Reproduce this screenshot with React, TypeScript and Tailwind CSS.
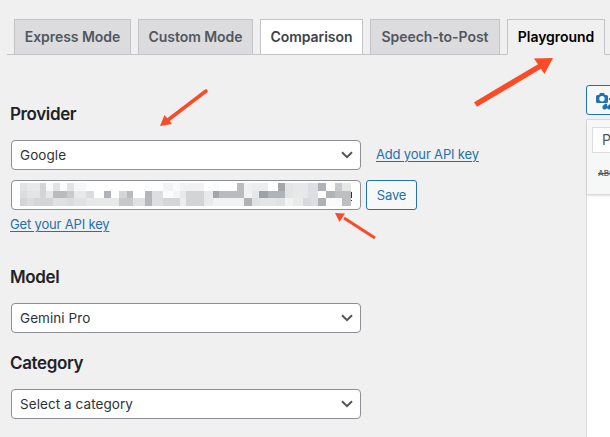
import React from "react";

type Cell = [number, number, string];

// Redacted key: horizontal runs of [start, end, colour] for each row of blocks.
const MOSAIC: Cell[][] = [
  [
    [0, 7, "#e2e3e4"], [7, 20, "#e8e9e9"], [20, 26, "#d4d5d7"], [26, 33, "#f8faf9"], [33, 40, "#e2e3e4"],
    [40, 47, "#fafcfb"], [47, 54, "#e2e3e4"], [54, 66, "#f6f7f7"], [125, 132, "#fcfdfd"], [143, 153, "#f2f4f4"],
    [153, 160, "#f9fbfa"], [160, 184, "#f2f2f2"], [193, 199, "#f9fbfb"], [217, 224, "#b9bbbd"], [224, 232, "#f1f1f1"],
    [232, 248, "#ecedee"], [258, 265, "#a4a7aa"], [265, 273, "#e2e4e5"], [273, 288, "#e7e9e8"], [288, 298, "#dddee1"],
    [298, 306, "#afb2b5"], [306, 315, "#fcfcfc"], [315, 322, "#c9cacd"], [322, 331, "#e5e7e7"],
  ],
  [
    [0, 7, "#dcdddf"], [7, 20, "#e3e4e5"], [20, 26, "#d4d5d7"], [26, 33, "#e6e7e8"], [33, 47, "#b9bbbd"],
    [47, 54, "#c9cacb"], [54, 66, "#e8e9e9"], [66, 74, "#dbdcde"], [84, 91, "#b0b3b6"], [91, 99, "#fbfcfc"],
    [99, 107, "#d4d5d7"], [107, 113, "#b9bbbd"], [125, 132, "#b4b6b9"], [132, 143, "#dddee0"], [143, 153, "#fafcfb"],
    [153, 160, "#f4f6f6"], [160, 166, "#e8e9e9"], [166, 184, "#d3d4d6"], [184, 193, "#e8eaea"], [193, 199, "#a3a5a9"],
    [199, 224, "#b9bbbd"], [224, 232, "#f2f2f2"], [232, 239, "#e6e7e9"], [239, 248, "#9fa2a5"], [248, 265, "#b1b4b7"],
    [265, 273, "#e2e4e5"], [273, 288, "#e7e9e8"], [288, 298, "#dddee1"], [306, 315, "#b0b3b6"], [315, 331, "#bebfc1"],
  ],
  [
    [0, 7, "#d4d5d7"], [7, 14, "#dbdcde"], [14, 33, "#d4d5d7"], [33, 47, "#e0e1e2"], [47, 54, "#dbdcde"],
    [54, 66, "#e1e2e3"], [66, 99, "#e7e8e8"], [99, 113, "#c7c8ca"], [113, 125, "#dfe0e2"], [125, 132, "#b5b7ba"],
    [132, 143, "#dddee0"], [143, 160, "#d5d6d8"], [160, 166, "#ecedee"], [166, 184, "#d3d4d6"], [184, 193, "#e9eaea"],
    [193, 199, "#f1f3f2"], [199, 224, "#f1f3f2"], [224, 232, "#afb2b5"], [232, 240, "#e0e1e4"], [240, 256, "#e5e6e7"],
    [256, 265, "#e0e1e4"], [265, 273, "#f1f3f2"], [273, 283, "#e9eaea"], [283, 291, "#d8d9db"], [291, 298, "#dddee1"],
    [298, 306, "#afb2b5"], [306, 322, "#fafafa"], [322, 331, "#bebfc1"],
  ],
];
const ROWS = [[0, 8], [8, 7], [15, 8]];

function Mosaic() {
  return (
    <svg width="334" height="23" viewBox="0 0 334 23" shapeRendering="crispEdges" aria-hidden="true">
      {MOSAIC.map((row, r) =>
        row.map(([a, b, c]) => <rect key={`${r}-${a}`} x={a} y={ROWS[r][0]} width={b - a} height={ROWS[r][1]} fill={c} />)
      )}
      <rect x="331" y="9" width="1" height="6" fill="#2c3338" />
      <rect x="331" y="17" width="1" height="1" fill="#2c3338" />
    </svg>
  );
}

function Tab({ label, look }: { label: string; look: string }) {
  return (
    <div className={`flex h-9 items-center justify-center border border-[#c3c4c7] pb-[2px] text-[14px] font-semibold tracking-[-0.05px] whitespace-nowrap ${look}`}>
      {label}
    </div>
  );
}

function Select({ value }: { value: string }) {
  return (
    <div className="flex h-[30px] w-[350px] items-center justify-between rounded-[4px] border border-[#8c8f94] bg-white pl-2 pr-[7px] text-[13.5px] tracking-[0.07px] text-[#2c3338]">
      <span>{value}</span>
      <svg width="12" height="8" viewBox="0 0 12 8" fill="none" stroke="#555" strokeWidth="2" aria-hidden="true">
        <path d="M1 1.2 6 6.2 11 1.2" />
      </svg>
    </div>
  );
}

function Heading({ children }: { children: string }) {
  return <h3 className="ml-[-1px] h-6 text-[17px] leading-6 font-semibold tracking-[-0.37px] text-[#1d2327]">{children}</h3>;
}

function Link({ children }: { children: string }) {
  return (
    <a className="text-[13px] leading-4 tracking-[-0.17px] text-[#2271b1] underline decoration-1 underline-offset-2 whitespace-nowrap">{children}</a>
  );
}

export default function App() {
  return (
    <div className="relative h-[437px] w-[610px] overflow-hidden bg-[#f0f0f0] font-['Inter',sans-serif]">
      <nav className="ml-[7px] mt-[19px] flex h-9 gap-[7px] border-b border-[#c3c4c7] pl-[7px]">
        <Tab label="Express Mode" look="w-[117px] bg-[#dcdcde] text-[#50575e]" />
        <Tab label="Custom Mode" look="w-[115px] bg-[#dcdcde] text-[#50575e]" />
        <Tab label="Comparison" look="w-[103px] bg-white text-[#3c434a]" />
        <Tab label="Speech-to-Post" look="w-[130px] bg-[#dcdcde] text-[#50575e]" />
        <Tab label="Playground" look="w-[98px] border-b-[#f0f0f0] bg-[#f0f0f0] text-black" />
      </nav>

      <div className="flex">
        <main className="w-[586px] shrink-0 pl-[11px] pt-[47px]">
          <Heading>Provider</Heading>
          <div className="mt-[14px] flex items-center gap-[15px]">
            <Select value="Google" />
            <div className="flex h-[30px] items-center pb-[3px]">
              <Link>Add your API key</Link>
            </div>
          </div>
          <div className="mt-[10px] flex gap-[5px]">
            <div className="flex h-[30px] w-[350px] items-start rounded-[4px] border border-[#8c8f94] bg-white pl-2 pt-[2px]">
              <Mosaic />
            </div>
            <button className="h-[30px] w-[51px] rounded-[3px] border border-[#2271b1] bg-[#f6f7f7] pt-[2px] text-[13px] tracking-[-0.1px] text-[#2271b1]">
              Save
            </button>
          </div>
          <div className="ml-[-1px] mt-[6px] flex h-[17px] items-start">
            <Link>Get your API key</Link>
          </div>
          <div className="mt-8">
            <Heading>Model</Heading>
          </div>
          <div className="mt-[14px]">
            <Select value="Gemini Pro" />
          </div>
          <div className="mt-[18px]">
            <Heading>Category</Heading>
          </div>
          <div className="mt-[14px]">
            <Select value="Select a category" />
          </div>
        </main>

        <aside className="w-[130px] shrink-0 pt-[30px]">
          <div className="h-[30px] rounded-[3px] border border-[#2271b1] bg-[#f6f7f7] pl-[9px] pt-[7px]">
            <svg width="18" height="18" viewBox="0 0 18 18" fill="#2271b1" aria-hidden="true">
              <path fillRule="evenodd" d="M1.5 2H3l1-2h4l1 2h1.5Q12 2 12 3.500V8.500Q12 10 10.500 10h-9Q0 10 0 8.500v-5Q0 2 1.500 2ZM6 3a2.700 2.700 0 1 0 0 5.400A2.700 2.700 0 0 0 6 3Z" />
              <path d="M13 5h5v2h-5z" />
              <path d="M9.500 10.500 11 11v3a2.300 2.300 0 1 1-3.500-1.700zM14 10.500h1.500V14a2.300 2.300 0 1 1-2.500-2z" />
            </svg>
          </div>
          <div className="mt-1 h-[330px] border border-[#dcdcde] bg-white">
            <div className="h-[75px] border-b border-[#dcdcde] bg-[#f6f7f7] pl-[5px] pt-[7px] shadow-sm">
              <div className="flex h-[26px] w-[110px] items-center border border-[#dcdcde] bg-white pl-[9px] pb-[2px] text-[14px] text-[#50575e]">
                Paragraph
              </div>
              <div className="mt-[14px] pl-[6px] text-[8px] leading-3 font-medium text-[#50575e] line-through">ABC</div>
            </div>
          </div>
        </aside>
      </div>

      <svg className="pointer-events-none absolute inset-0" width="610" height="437" viewBox="0 0 610 437" fill="#fa4b26" aria-hidden="true">
        <g stroke="#fa4b26">
          <path d="M475.500 104.500 542 65" strokeWidth="5.500" />
          <path d="M206 91 168 120" strokeWidth="3.500" strokeLinecap="round" />
          <path d="M375 238 344 218" strokeWidth="3" />
        </g>
        <path d="M553 58 534 58.500 544.500 74Z" />
        <path d="M160 126 164.500 115 172 124Z" />
        <path d="M335 213 345 213.500 339.500 222Z" />
      </svg>
    </div>
  );
}
